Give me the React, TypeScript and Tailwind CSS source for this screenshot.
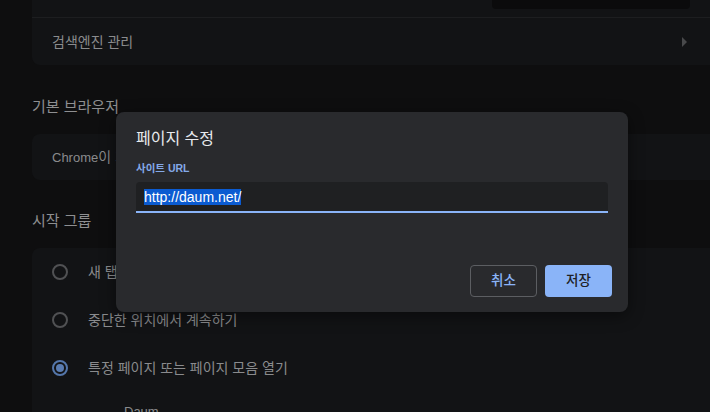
const font = "font-['Liberation_Sans','Noto_Sans_CJK_KR',sans-serif]"

const Radio = ({ checked }: { checked?: boolean }) =>
  checked ? (
    <div className="w-4 h-4 rounded-full border-2 border-[#5476aa] flex items-center justify-center">
      <div className="w-2 h-2 rounded-full bg-[#5a7cb1]" />
    </div>
  ) : (
    <div className="w-4 h-4 rounded-full border-2 border-[#505153]" />
  )

const RadioRow = ({ label, checked }: { label: string; checked?: boolean }) => (
  <div className="h-12 flex items-center pl-5 gap-5">
    <Radio checked={checked} />
    <span className="text-[14px] leading-4 text-[#8a8b8d]">{label}</span>
  </div>
)

export default function App() {
  return (
    <div className={`${font} relative w-[710px] h-[412px] overflow-hidden bg-[#0e0e0f]`}>
      <div className="ml-8 w-[700px]">
        {/* search engine card */}
        <div className="bg-[#121315] rounded-b-lg">
          <div className="h-[18px] flex justify-start pl-[460px] border-b border-[#1d1e20]">
            <div className="w-[198px] h-[9px] bg-[#0b0b0c] rounded-b" />
          </div>
          <div className="h-[47px] flex items-center justify-between pl-5 pr-[44px]">
            <span className="text-[14px] leading-4 text-[#8a8b8d]">검색엔진 관리</span>
            <svg width="6" height="10" viewBox="0 0 6 10">
              <polygon points="0,0 5,5 0,10" fill="#48494b" />
            </svg>
          </div>
        </div>

        <h2 className="mt-8 text-[15px] leading-5 text-[#8e8f91]">기본 브라우저</h2>
        <div className="mt-[17px] h-[46px] bg-[#121315] rounded-lg flex items-center pl-5">
          <span className="text-[14px] leading-4 text-[#8a8b8d]">
            <span className="text-[13px]">Chrome</span>이 기본 브라우저입니다.
          </span>
        </div>

        <h2 className="mt-[31px] text-[15px] leading-5 text-[#8e8f91]">시작 그룹</h2>
        <div className="mt-[17px] bg-[#121315] rounded-lg">
          <RadioRow label="새 탭 페이지 열기" />
          <RadioRow label="중단한 위치에서 계속하기" />
          <RadioRow label="특정 페이지 또는 페이지 모음 열기" checked />
          <div className="pl-[92px] pt-3 text-[13px] leading-4 text-[#8a8b8d]">Daum</div>
          <div className="pl-[92px] text-[12px] leading-4 text-[#6a6b6d]">http://daum.net/</div>
        </div>
      </div>

      {/* dialog */}
      <div className="absolute left-[116px] top-[112px] w-[512px] h-[200px] rounded-lg bg-[#292a2d] px-5 pt-[17px] shadow-[0_4px_16px_rgba(0,0,0,0.45)]">
        <h1 className="text-[16px] leading-5 text-[#e8eaed]">페이지 수정</h1>
        <div className="mt-[12px] text-[10.5px] leading-[14px] font-bold text-[#84a9e8]">사이트 URL</div>
        <div className="mt-[7px] h-[31px] bg-[#1f2022] rounded-t border-b-2 border-[#8ab4f8] flex items-center px-2">
          <span className="text-[14px] leading-4 text-white bg-[#0b5bd1]">http://daum.net/</span>
        </div>
        <div className="mt-[52px] -mr-1 flex justify-end gap-2">
          <button className="w-[67px] h-[32px] rounded border border-[#5c5e62] text-[13.5px] font-medium text-[#8ab4f8]">
            취소
          </button>
          <button className="w-[67px] h-[32px] rounded bg-[#8ab4f8] text-[13.5px] font-medium text-[#202124]">
            저장
          </button>
        </div>
      </div>
    </div>
  )
}
